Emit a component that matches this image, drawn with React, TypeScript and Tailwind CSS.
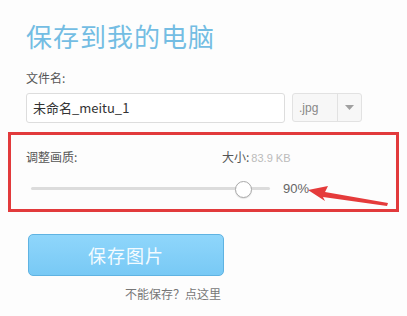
import React from "react";

const cjk = "font-['Microsoft_YaHei','Noto_Sans_CJK_SC',sans-serif]";

const QualitySlider = ({ value }: { value: number }) => {
  return (
    <div className="flex items-center">
      <div className="relative w-[239px] h-[16px] flex items-center">
        <div className="w-full h-[3px] bg-[#dcdcdc] rounded-full" />
        <div
          className="absolute top-0 w-[17px] h-[17px] -ml-[8px] rounded-full bg-white border border-[#a9a9a9] shadow-[0_1px_1px_rgba(0,0,0,0.1)]"
          style={{ left: `${(value / 100) * 236}px` }}
        />
      </div>
      <span className="ml-[13px] text-[13px] text-[#666] font-['Liberation_Sans',sans-serif]">
        {value}%
      </span>
    </div>
  );
};

const App = () => {
  return (
    <div className={`relative w-[407px] h-[316px] bg-[#fdfdfd] ${cjk}`}>
      <div className="pl-[26px] pt-[17px]">
        <h1 className="text-[26px] leading-[38px] text-[#74bde3] tracking-[1px]">
          保存到我的电脑
        </h1>
        <div className="mt-[16px] text-[12px] leading-[14px] text-[#555]">文件名:</div>
        <div className="mt-[8px] flex gap-[7px]">
          <div className="w-[259px] h-[30px] border border-[#dddddd] rounded-[3px] bg-white flex items-center pl-[6px] text-[13px] text-[#333]">
            未命名_meitu_1
          </div>
          <div className="w-[70px] h-[29px] border border-[#e2e2e2] rounded-[3px] bg-[#f7f7f7] flex">
            <div className="w-[44px] flex items-center pl-[6px] text-[12px] text-[#888] font-['Liberation_Sans',sans-serif]">
              .jpg
            </div>
            <div className="flex-1 border-l border-[#e2e2e2] flex items-center justify-center">
              <svg width="9" height="5" viewBox="0 0 9 5">
                <path d="M0 0 L9 0 L4.5 5 Z" fill="#a0a0a0" />
              </svg>
            </div>
          </div>
        </div>
      </div>

      <div className="mx-[8px] mt-[9px] h-[80px] border-[3px] border-[#e23a3c] px-[15px] pt-[14px]">
        <div className="flex text-[12px] leading-[16px] text-[#555]">
          <span className="w-[196px]">调整画质:</span>
          <span>
            大小:
            <span className="ml-[2px] text-[#bbb] font-['Liberation_Sans',sans-serif] text-[11px]">
              83.9 KB
            </span>
          </span>
        </div>
        <div className="mt-[13px] pl-[5px]">
          <QualitySlider value={90} />
        </div>
      </div>

      {/* red annotation arrow */}
      <svg className="absolute left-0 top-0" width="407" height="316" viewBox="0 0 407 316">
        <path
          d="M308 190 L328 186 L325 192 L388 203 L387 206 L323 197 L325 201 Z"
          fill="#e53b3b"
        />
      </svg>

      <div className="pl-[28px] mt-[22px]">
        <button className="w-[196px] h-[42px] rounded-[5px] border border-[#5fb3e2] bg-gradient-to-b from-[#8fd6fb] to-[#78c9f5] text-[#f4fbff] text-[18px] tracking-[1px]">
          保存图片
        </button>
        <div className="mt-[10px] w-[193px] text-right text-[12px] leading-[16px] text-[#777]">
          不能保存？点这里
        </div>
      </div>
    </div>
  );
};

export default App;
